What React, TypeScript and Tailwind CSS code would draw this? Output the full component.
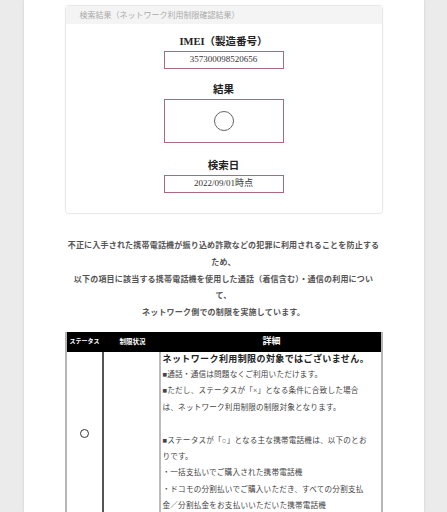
import React from 'react';

const serif = { fontFamily: '"Liberation Serif", "Noto Sans CJK JP", serif' };

const notice = [
    '不正に入手された携帯電話機が振り込め詐欺などの犯罪に利用されることを防止する',
    'ため、',
    '以下の項目に該当する携帯電話機を使用した通話（着信含む）・通信の利用につい',
    'て、',
    'ネットワーク側での制限を実施しています。',
];

const details = [
    '■通話・通信は問題なくご利用いただけます。',
    '■ただし、ステータスが「×」となる条件に合致した場合',
    'は、ネットワーク利用制限の制限対象となります。',
    '',
    '■ステータスが「○」となる主な携帯電話機は、以下のとお',
    'りです。',
    '・一括支払いでご購入された携帯電話機',
    '・ドコモの分割払いでご購入いただき、すべての分割支払',
    '金／分割払金をお支払いいただいた携帯電話機',
];

function ResultBox({ label, children, tall }: { label: string; children: React.ReactNode; tall?: boolean }) {
    return (
        <div className="flex flex-col items-center">
            <div className="h-[16px] text-[10.5px] leading-[16px] font-bold text-[#222]">{label}</div>
            <div
                className={`mt-[1px] w-[120px] border border-[#a86a7c] flex items-center justify-center text-[9px] text-[#333] ${
                    tall ? 'h-[44px]' : 'h-[18px]'
                }`}
            >
                {children}
            </div>
        </div>
    );
}

export default function App() {
    return (
        <div className="min-h-[512px] bg-[#ebebeb] flex justify-center" style={serif}>
            <div className="w-[400px] bg-white shadow-[0_0_3px_rgba(0,0,0,0.12)] pt-[5px] px-[41px] overflow-hidden h-[512px]">
                {/* result card */}
                <div className="rounded-[4px] border border-[#e9e9e9] shadow-[0_0_2px_rgba(0,0,0,0.05)] pb-[20px]">
                    <div
                        className="h-[18px] bg-[#f4f4f4] pl-[14px] text-[8px] leading-[18px] text-[#aaa]"
                        style={{ fontFamily: '"Noto Sans CJK JP", sans-serif' }}
                    >
                        検索結果（ネットワーク利用制限確認結果）
                    </div>
                    <div className="flex flex-col items-center pt-[10px]">
                        <ResultBox label="IMEI（製造番号）">357300098520656</ResultBox>
                        <div className="mt-[13px]">
                            <ResultBox label="結果" tall>
                                <span className="block w-[20px] h-[20px] rounded-full border border-[#666]" />
                            </ResultBox>
                        </div>
                        <div className="mt-[15px]">
                            <ResultBox label="検索日">2022/09/01時点</ResultBox>
                        </div>
                    </div>
                </div>

                {/* notice */}
                <div className="mt-[24px] text-center text-[8px] leading-[16.8px] text-[#555] font-bold tracking-[0.2px]">
                    {notice.map((line, i) => (
                        <div key={i} className="whitespace-nowrap">
                            {line}
                        </div>
                    ))}
                </div>

                {/* table */}
                <div className="mt-[10px] border-x-2 border-[#b5b5b5]">
                    <div className="flex h-[20px] bg-black text-white items-center">
                        <div className="w-[38px] pl-[3px] text-[6px] font-bold">ステータス</div>
                        <div className="w-[58px] pl-[15px] text-[6.5px] font-bold">制限状況</div>
                        <div className="flex-1 text-center text-[9px] font-bold">詳細</div>
                    </div>
                    <div className="flex">
                        <div className="w-[37px] border-r-2 border-[#555] flex justify-center pt-[77px]">
                            <span className="block w-[9px] h-[9px] rounded-full border border-[#333]" />
                        </div>
                        <div className="w-[57px] border-r-2 border-[#bbb]" />
                        <div className="flex-1 pl-[2px] pb-[10px] text-[#444]">
                            <div className="text-[9px] leading-[15px] font-bold text-[#222] tracking-[0.4px] whitespace-nowrap">
                                ネットワーク利用制限の対象ではございません。
                            </div>
                            {details.map((line, i) => (
                                <div key={i} className="h-[16.4px] text-[7.6px] leading-[16.4px] tracking-[0.2px] whitespace-nowrap">
                                    {line}
                                </div>
                            ))}
                        </div>
                    </div>
                </div>
            </div>
        </div>
    );
}
